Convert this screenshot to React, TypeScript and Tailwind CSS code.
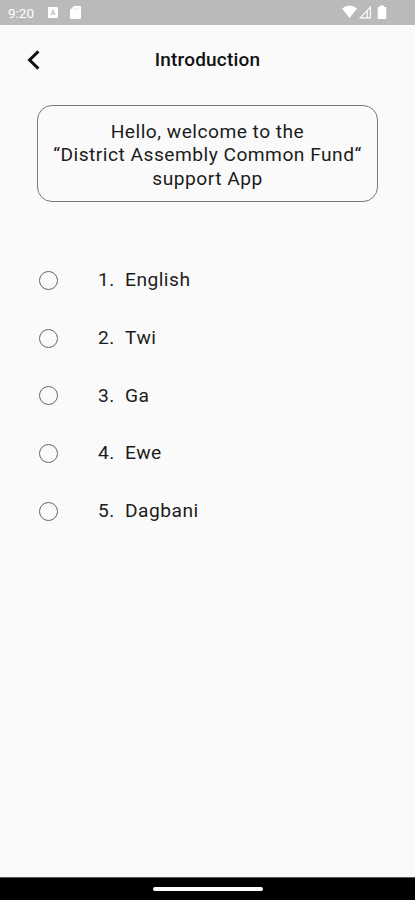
const languages = ["English", "Twi", "Ga", "Ewe", "Dagbani"];

function StatusBar() {
  return (
    <div className="flex h-[25px] shrink-0 justify-between bg-[#bababa] text-white">
      <div className="flex items-start pl-[8px] pt-[1px]">
        <span className="w-[40px] text-[13.5px] leading-[24px]">9:20</span>
        <svg className="mt-[6px] h-[11px] w-[10px]" viewBox="0 0 10 11">
          <rect width="10" height="11" rx="1" fill="currentColor" />
          <path d="M3 8 5 3l2 5M3.7 6.5h2.6" fill="none" stroke="#bababa" strokeWidth="1" />
        </svg>
        <svg className="ml-[12px] mt-[5px] h-[13px] w-[11px]" viewBox="0 0 11 13">
          <path d="M4 0h6a1 1 0 0 1 1 1v11a1 1 0 0 1-1 1H1a1 1 0 0 1-1-1V4z" fill="currentColor" />
          <path d="M4 2v2M6 2v2M8 2v2" stroke="#bababa" strokeWidth=".7" opacity=".5" />
        </svg>
      </div>
      <svg className="mt-[5px] mr-[27px] h-[15px] w-[46px]" viewBox="0 0 46 15">
        <path d="M0 3.6Q7.5-2.6 15 3.6L7.5 13z" fill="currentColor" />
        <path d="M18.2 12.8 28.4 2.2v10.6zM25.2 6v6.5" fill="none" stroke="currentColor" strokeWidth="1.2" />
        <path d="M38 .5h4V2h1.3q1 0 1 1v10q0 1-1 1h-6.6q-1 0-1-1V3q0-1 1-1H38z" fill="currentColor" />
      </svg>
    </div>
  );
}

export default function App() {
  return (
    <div className="flex h-[900px] w-full flex-col overflow-hidden bg-[#fafafa] font-['Roboto',sans-serif] text-[#1c1c1c]">
      <StatusBar />
      <header className="grid h-[70px] shrink-0 grid-cols-[60px_1fr_60px] items-center">
        <svg className="ml-[27px] h-[20px] w-[13px]" viewBox="0 0 13 20">
          <path d="M11.4 1.4 2.6 10l8.8 8.6" fill="none" stroke="#111" strokeWidth="3" />
        </svg>
        <h1 className="text-center text-[19px] font-medium tracking-[0.2px] text-[#111]">Introduction</h1>
      </header>
      <p className="ml-[37px] mt-[10px] h-[97px] w-[341px] shrink-0 rounded-[15px] border border-[#777] pt-[14px] text-center text-[19.2px] leading-[23.3px] tracking-[0.48px]">
        Hello, welcome to the
        <br />
        “District Assembly Common Fund“
        <br />
        support App
      </p>
      <ul className="mt-[50px] flex flex-1 flex-col">
        {languages.map((name, i) => (
          <li key={name} className="flex h-[57.6px] items-center pl-[39px] text-[19.2px] tracking-[0.48px]">
            <span className="size-[19px] rounded-full border-[1.5px] border-[#666]" />
            <span className="ml-[40px] w-[27px]">{i + 1}.</span>
            <span>{name}</span>
          </li>
        ))}
      </ul>
      <footer className="flex h-[23px] shrink-0 items-start justify-center border-t border-[#555] bg-black pt-[9px]">
        <span className="h-[4px] w-[110px] rounded-full bg-white" />
      </footer>
    </div>
  );
}
